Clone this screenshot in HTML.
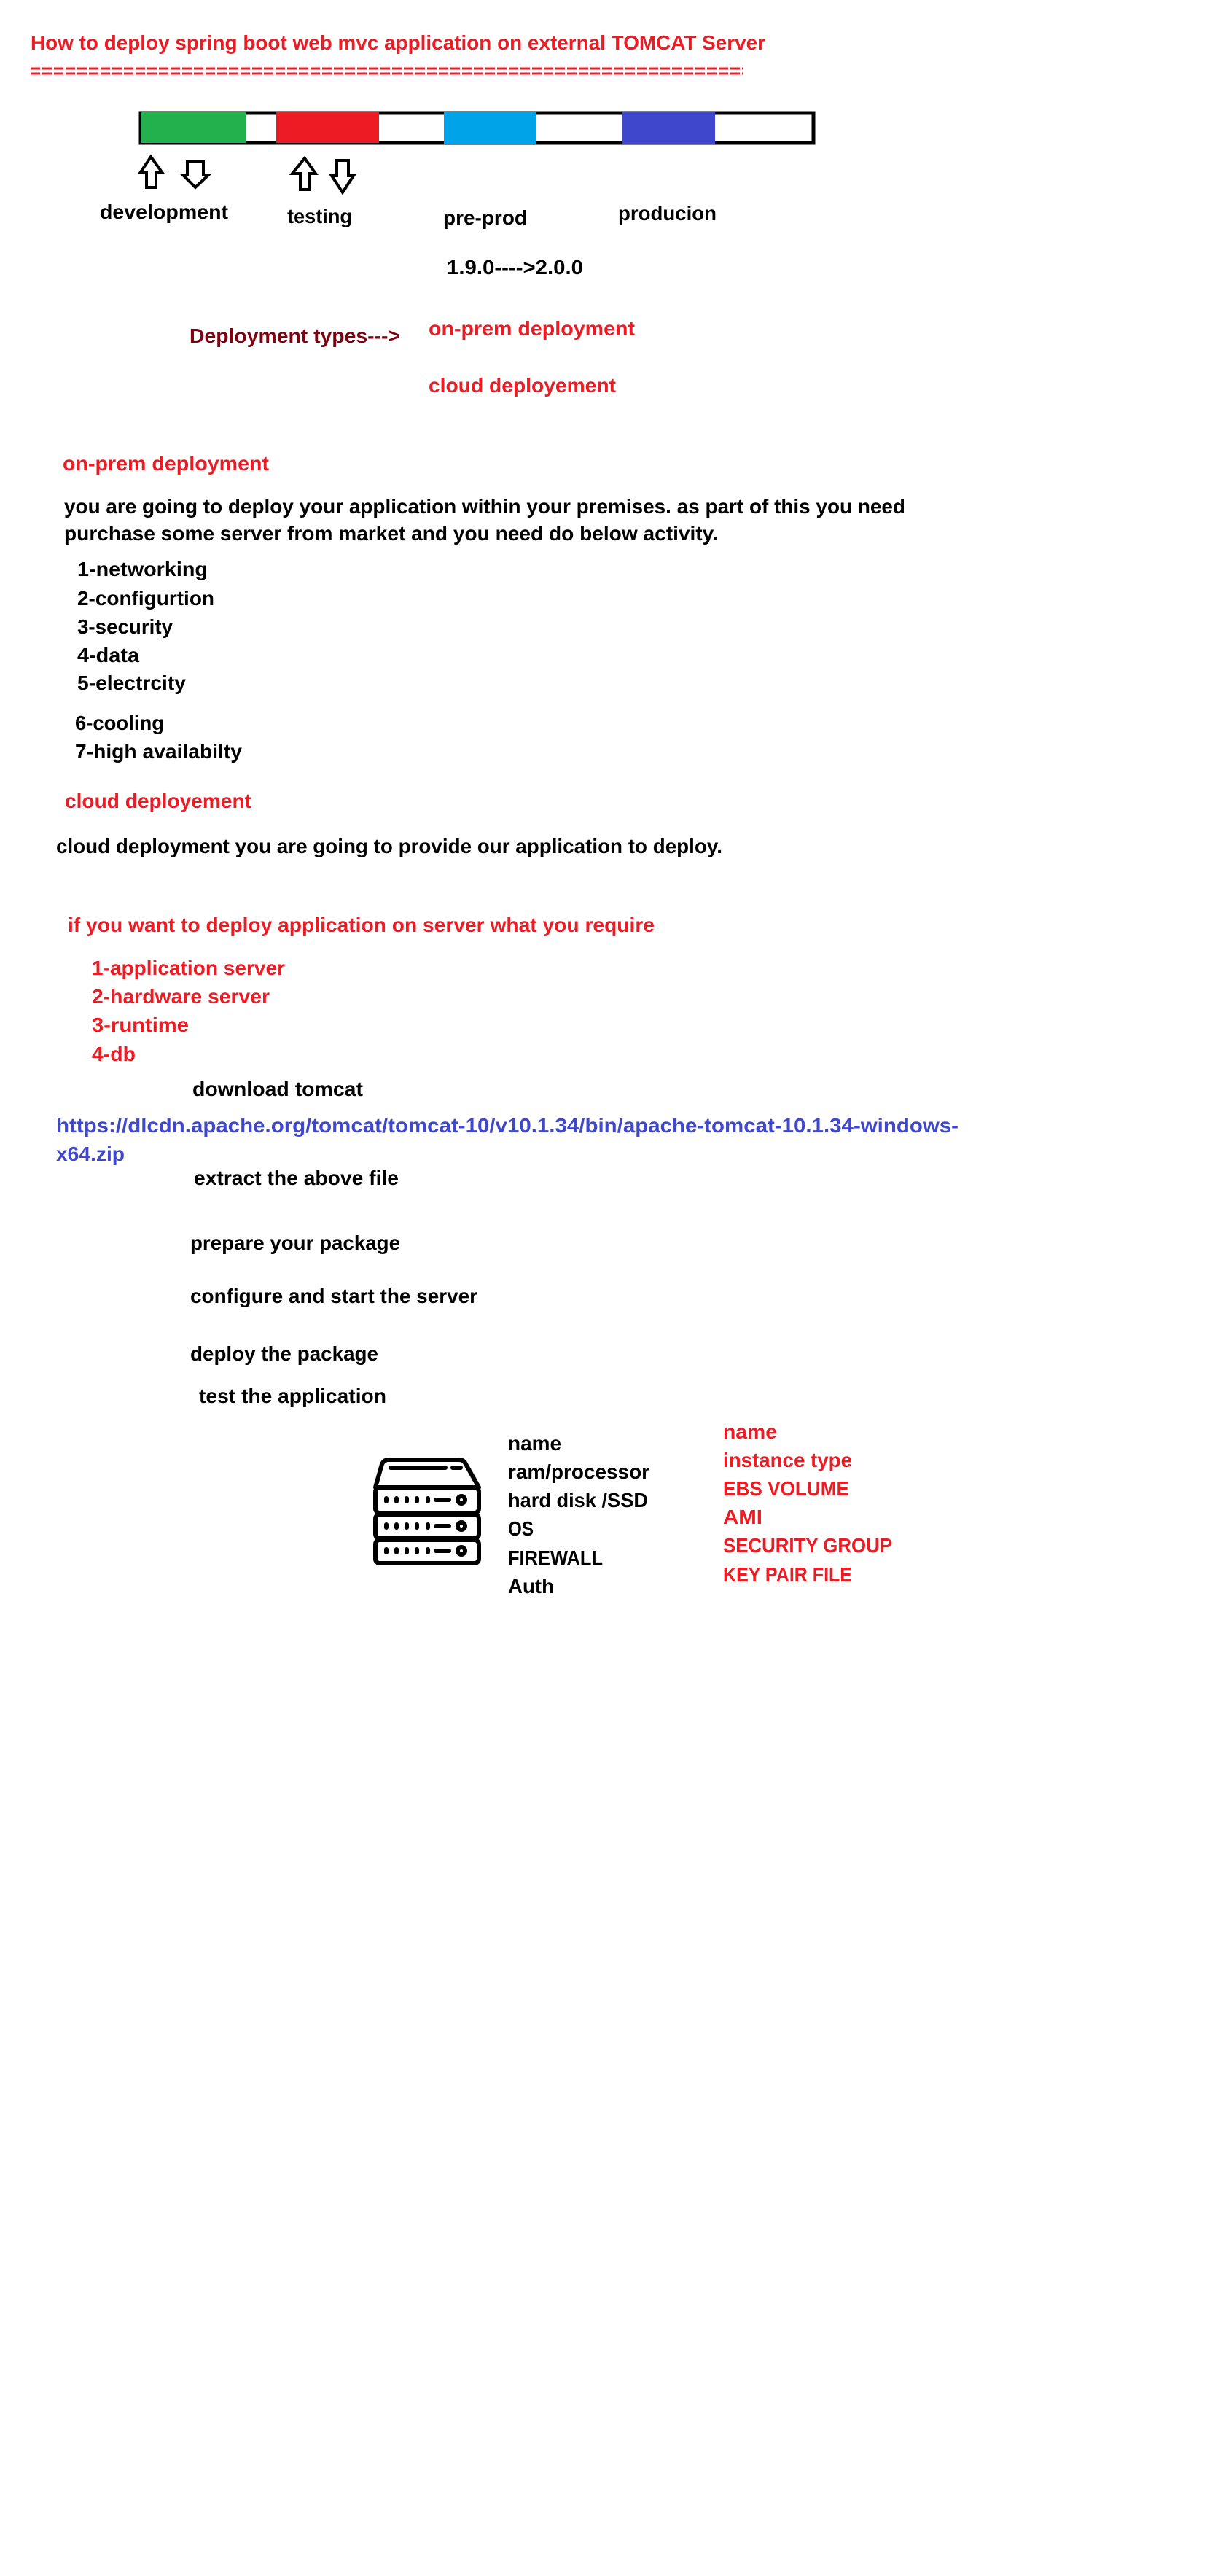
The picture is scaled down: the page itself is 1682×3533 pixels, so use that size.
<!DOCTYPE html>
<html><head><meta charset="utf-8"><style>
html,body{margin:0;padding:0;background:#fff;}
svg{display:block;}
text{font-family:"Liberation Sans",sans-serif;font-weight:bold;font-size:28px;}
.r{fill:#ed1c24;} .k{fill:#000;} .b{fill:#3f48cc;} .d{fill:#7f0010;}
</style></head><body>
<svg width="1682" height="3533" viewBox="0 0 1682 3533" xmlns="http://www.w3.org/2000/svg">
<rect width="1682" height="3533" fill="#fff"/>
<text class="r" x="42" y="68" font-size="31" textLength="1008" lengthAdjust="spacingAndGlyphs">How to deploy spring boot web mvc application on external TOMCAT Server</text>
<line x1="42" y1="94" x2="1019" y2="94" stroke="#ed1c24" stroke-width="3" stroke-dasharray="13,3"/>
<line x1="42" y1="101" x2="1019" y2="101" stroke="#ed1c24" stroke-width="3" stroke-dasharray="13,3"/>

<rect x="193" y="155" width="923" height="41" fill="none" stroke="#000" stroke-width="5"/>
<rect x="194" y="154" width="143" height="42" fill="#22b14c"/>
<rect x="379" y="153" width="141" height="43" fill="#ed1c24"/>
<rect x="609" y="153" width="126" height="45" fill="#00a2e8"/>
<rect x="853" y="153" width="128" height="45" fill="#3f48cc"/>

<g fill="none" stroke="#000" stroke-width="4" stroke-linejoin="miter">
<path d="M207 215 L222 236 L214 236 L214 257 L201 257 L201 236 L193 236 Z"/>
<path d="M257 222 L279 222 L279 240 L286 240 L268 257 L251 240 L257 240 Z"/>
<path d="M418 217 L433 238 L425 238 L425 260 L412 260 L412 238 L401 238 Z"/>
<path d="M462 220 L478 220 L478 241 L485 241 L470 264 L455 241 L462 241 Z"/>
</g>

<text class="k" x="137" y="300" textLength="176" lengthAdjust="spacingAndGlyphs">development</text>
<text class="k" x="394" y="306" textLength="89" lengthAdjust="spacingAndGlyphs">testing</text>
<text class="k" x="608" y="308" textLength="115" lengthAdjust="spacingAndGlyphs">pre-prod</text>
<text class="k" x="848" y="302" textLength="135" lengthAdjust="spacingAndGlyphs">producion</text>
<text class="k" x="613" y="376" textLength="187" lengthAdjust="spacingAndGlyphs">1.9.0----&gt;2.0.0</text>
<text class="d" x="260" y="470" textLength="289" lengthAdjust="spacingAndGlyphs">Deployment types---&gt;</text>
<text class="r" x="588" y="460" textLength="283" lengthAdjust="spacingAndGlyphs">on-prem deployment</text>
<text class="r" x="588" y="538" textLength="257" lengthAdjust="spacingAndGlyphs">cloud deployement</text>

<text class="r" x="86" y="645" textLength="283" lengthAdjust="spacingAndGlyphs">on-prem deployment</text>
<text class="k" x="88" y="704" textLength="1154" lengthAdjust="spacingAndGlyphs">you are going to deploy your application within your premises. as part of this you need</text>
<text class="k" x="88" y="741" textLength="897" lengthAdjust="spacingAndGlyphs">purchase some server from market and you need do below activity.</text>
<text class="k" x="106" y="790" textLength="179" lengthAdjust="spacingAndGlyphs">1-networking</text>
<text class="k" x="106" y="830" textLength="188" lengthAdjust="spacingAndGlyphs">2-configurtion</text>
<text class="k" x="106" y="869" textLength="131" lengthAdjust="spacingAndGlyphs">3-security</text>
<text class="k" x="106" y="908" textLength="85" lengthAdjust="spacingAndGlyphs">4-data</text>
<text class="k" x="106" y="946" textLength="149" lengthAdjust="spacingAndGlyphs">5-electrcity</text>
<text class="k" x="103" y="1001" textLength="122" lengthAdjust="spacingAndGlyphs">6-cooling</text>
<text class="k" x="103" y="1040" textLength="229" lengthAdjust="spacingAndGlyphs">7-high availabilty</text>
<text class="r" x="89" y="1108" textLength="256" lengthAdjust="spacingAndGlyphs">cloud deployement</text>
<text class="k" x="77" y="1170" textLength="914" lengthAdjust="spacingAndGlyphs">cloud deployment you are going to provide our application to deploy.</text>
<text class="r" x="93" y="1278" textLength="805" lengthAdjust="spacingAndGlyphs">if you want to deploy application on server what you require</text>
<text class="r" x="126" y="1337" textLength="265" lengthAdjust="spacingAndGlyphs">1-application server</text>
<text class="r" x="126" y="1376" textLength="244" lengthAdjust="spacingAndGlyphs">2-hardware server</text>
<text class="r" x="126" y="1415" textLength="133" lengthAdjust="spacingAndGlyphs">3-runtime</text>
<text class="r" x="126" y="1455" textLength="60" lengthAdjust="spacingAndGlyphs">4-db</text>

<text class="k" x="264" y="1503" textLength="234" lengthAdjust="spacingAndGlyphs">download tomcat</text>
<text class="b" x="77" y="1553" textLength="1238" lengthAdjust="spacingAndGlyphs">https://dlcdn.apache.org/tomcat/tomcat-10/v10.1.34/bin/apache-tomcat-10.1.34-windows-</text>
<text class="b" x="77" y="1592" textLength="94" lengthAdjust="spacingAndGlyphs">x64.zip</text>
<text class="k" x="266" y="1625" textLength="281" lengthAdjust="spacingAndGlyphs">extract the above file</text>
<text class="k" x="261" y="1714" textLength="288" lengthAdjust="spacingAndGlyphs">prepare your package</text>
<text class="k" x="261" y="1787" textLength="394" lengthAdjust="spacingAndGlyphs">configure and start the server</text>
<text class="k" x="261" y="1866" textLength="258" lengthAdjust="spacingAndGlyphs">deploy the package</text>
<text class="k" x="273" y="1924" textLength="257" lengthAdjust="spacingAndGlyphs">test the application</text>

<g fill="none" stroke="#000" stroke-width="6" stroke-linecap="round" stroke-linejoin="round">
<path d="M533 2002 L630 2002 Q636 2002 639 2008 L657 2040 L515 2040 L524 2008 Q527 2002 533 2002 Z"/>
<rect x="515" y="2040" width="142" height="35" rx="6"/>
<rect x="515" y="2077" width="142" height="33" rx="6"/>
<rect x="515" y="2112" width="142" height="32" rx="6"/>
<path d="M536 2013 L611 2013 M621 2013 L632 2013"/>
<path d="M530 2055 v4 M544 2055 v4 M558 2055 v4 M572 2055 v4 M587 2055 v4 M598 2057 L616 2057"/>
<path d="M530 2091 v4 M544 2091 v4 M558 2091 v4 M572 2091 v4 M587 2091 v4 M598 2093 L616 2093"/>
<path d="M530 2125 v4 M544 2125 v4 M558 2125 v4 M572 2125 v4 M587 2125 v4 M598 2127 L616 2127"/>
<circle cx="633" cy="2057" r="5"/>
<circle cx="633" cy="2093" r="5"/>
<circle cx="633" cy="2127" r="5"/>
</g>

<text class="k" x="697" y="1989" textLength="73" lengthAdjust="spacingAndGlyphs">name</text>
<text class="k" x="697" y="2028" textLength="194" lengthAdjust="spacingAndGlyphs">ram/processor</text>
<text class="k" x="697" y="2067" textLength="192" lengthAdjust="spacingAndGlyphs">hard disk /SSD</text>
<text class="k" x="697" y="2106" textLength="35" lengthAdjust="spacingAndGlyphs">OS</text>
<text class="k" x="697" y="2146" textLength="130" lengthAdjust="spacingAndGlyphs">FIREWALL</text>
<text class="k" x="697" y="2185" textLength="63" lengthAdjust="spacingAndGlyphs">Auth</text>

<text class="r" x="992" y="1973" textLength="74" lengthAdjust="spacingAndGlyphs">name</text>
<text class="r" x="992" y="2012" textLength="177" lengthAdjust="spacingAndGlyphs">instance type</text>
<text class="r" x="992" y="2051" textLength="173" lengthAdjust="spacingAndGlyphs">EBS VOLUME</text>
<text class="r" x="992" y="2090" textLength="54" lengthAdjust="spacingAndGlyphs">AMI</text>
<text class="r" x="992" y="2129" textLength="232" lengthAdjust="spacingAndGlyphs">SECURITY GROUP</text>
<text class="r" x="992" y="2169" textLength="177" lengthAdjust="spacingAndGlyphs">KEY PAIR FILE</text>
</svg>
</body></html>
